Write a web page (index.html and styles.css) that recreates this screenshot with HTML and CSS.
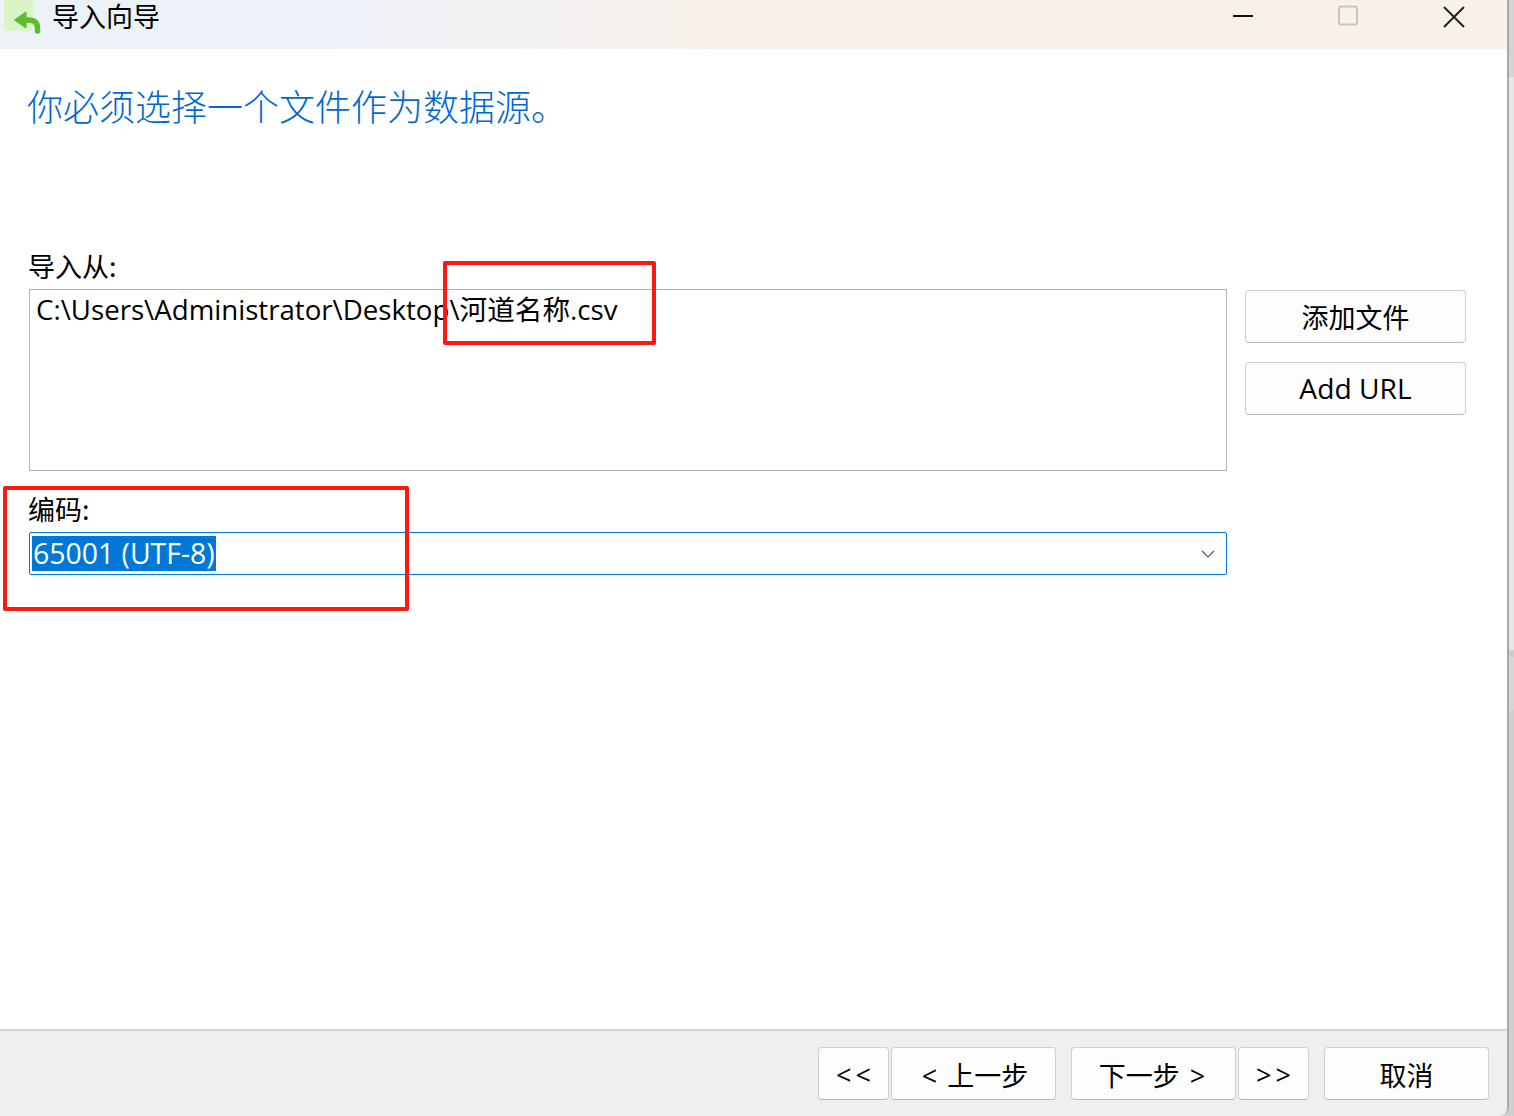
FILE: index.html
```html
<!DOCTYPE html>
<html lang="zh-CN">
<head>
    <meta charset="UTF-8">
    <title>导入向导</title>
    <link rel="stylesheet" href="styles.css">
</head>
<body>
    <div class="window">
        <div class="titlebar">
            <div class="title-left">
                <span class="app-icon">
                    <svg width="44" height="36" viewBox="0 0 44 36">
                        <rect x="4" y="-6" width="29" height="37" rx="4" fill="#d9f5c5"/>
                        <path d="M20 20 H28 Q37.5 20 37.5 28 V31" fill="none" stroke="#5dbb2e" stroke-width="5.5" stroke-linecap="round"/>
                        <path d="M14.5 20 L26 12 V28 Z" fill="#5dbb2e" stroke="#5dbb2e" stroke-width="1" stroke-linejoin="round"/>
                    </svg>
                </span>
                <span class="title-text">导入向导</span>
            </div>
            <div class="window-controls">
                <span class="win-btn"><svg width="22" height="22" viewBox="0 0 22 22"><path d="M1 11 H21" stroke="#111" stroke-width="2"/></svg></span>
                <span class="win-btn"><svg width="22" height="22" viewBox="0 0 22 22"><rect x="2" y="1.5" width="18" height="18" rx="2" fill="none" stroke="#c8c6c2" stroke-width="2"/></svg></span>
                <span class="win-btn"><svg width="24" height="24" viewBox="0 0 24 24"><path d="M2 2 L22 22 M22 2 L2 22" stroke="#222" stroke-width="2"/></svg></span>
            </div>
        </div>

        <div class="content">
            <h1 class="heading">你必须选择一个文件作为数据源。</h1>

            <label class="field-label first">导入从:</label>
            <div class="source-row">
                <div class="file-box">C:\Users\Administrator\Desktop\河道名称.csv</div>
                <div class="side-buttons">
                    <button class="btn">添加文件</button>
                    <button class="btn btn-latin">Add URL</button>
                </div>
            </div>

            <label class="field-label second">编码:</label>
            <div class="encoding-select">
                <span class="selected-text">65001 (UTF-8)</span>
                <svg class="chevron" width="14" height="8" viewBox="0 0 14 8"><path d="M1 1 L7 7 L13 1" fill="none" stroke="#555" stroke-width="1.2"/></svg>
            </div>
        </div>

        <div class="footer">
            <button class="btn btn-small">&lt;&lt;</button>
            <button class="btn btn-step nav-prev">&lt; 上一步</button>
            <button class="btn btn-step nav-next">下一步 &gt;</button>
            <button class="btn btn-small">&gt;&gt;</button>
            <button class="btn btn-step nav-cancel">取消</button>
        </div>
    </div>

    <!-- red annotation boxes drawn over the screenshot -->
    <div class="mark mark-file"></div>
    <div class="mark mark-encoding"></div>
</body>
</html>
```

FILE: styles.css
```css
html, body {
    margin: 0;
    height: 100%;
}

body {
    width: 1514px;
    height: 1116px;
    overflow: hidden;
    position: relative;
    /* the strip of desktop showing to the right of the window */
    background: linear-gradient(180deg,
        #d4d4d4 0, #d4d4d4 77px,
        #e6e6e6 77px, #e6e6e6 650px,
        #cdcdcd 650px, #cdcdcd 657px,
        #d6d6d6 657px, #d6d6d6 710px,
        #cfcfcf 710px);
    font-family: "Open Sans", "Noto Sans CJK SC", sans-serif;
    color: #000;
}

.window {
    display: flex;
    flex-direction: column;
    box-sizing: border-box;
    width: 1509px;
    height: 1116px;
    background: #fff;
    border-right: 2px solid #aaa;
    border-bottom-right-radius: 10px;
}

.titlebar {
    display: flex;
    justify-content: space-between;
    height: 49px;
    flex-shrink: 0;
    background: linear-gradient(90deg, #edf2f9 20%, #f8f0ea 48%);
}

.title-left {
    display: flex;
    align-items: flex-start;
}

.app-icon {
    display: block;
    width: 52px;
    height: 36px;
}

.title-text {
    font-family: "Noto Sans CJK SC", sans-serif;
    font-size: 27px;
    line-height: 32px;
}

.window-controls {
    display: flex;
    align-items: flex-start;
    padding-right: 43px;
    gap: 83px;
}

.win-btn {
    display: block;
    width: 22px;
    height: 22px;
    padding-top: 5px;
}

.content {
    flex: 1;
    padding: 0 0 0 29px;
}

.heading {
    margin: 32px 0 0 -2px;
    font-family: "Noto Sans CJK SC", sans-serif;
    font-size: 36px;
    font-weight: 300;
    line-height: 48px;
    color: #0068d0;
}

.field-label {
    display: block;
    margin-left: -1px;
    font-family: "Noto Sans CJK SC", sans-serif;
    font-size: 27px;
    line-height: 36px;
}

.field-label.first {
    margin-top: 119px;
    margin-bottom: 5px;
}

.field-label.second {
    margin-top: 20px;
    margin-bottom: 5px;
}

.source-row {
    display: flex;
    gap: 18px;
}

.file-box {
    box-sizing: border-box;
    width: 1198px;
    height: 182px;
    padding: 0 6px;
    border: 1px solid #b4b4b4;
    font-size: 27.65px;
    line-height: 38px;
}

.side-buttons {
    display: flex;
    flex-direction: column;
    gap: 19px;
    padding-top: 1px;
}

.btn {
    box-sizing: border-box;
    width: 221px;
    height: 53px;
    padding: 0;
    background: #fdfdfd;
    border: 1px solid #cfcfcf;
    border-bottom-color: #b8b8b8;
    border-radius: 4px;
    font-family: "Open Sans", "Noto Sans CJK SC", sans-serif;
    font-size: 27px;
    word-spacing: 3px;
    color: #000;
}

.btn-latin {
    padding-bottom: 2px;
    font-size: 28.2px;
    word-spacing: 0;
}

.encoding-select {
    display: flex;
    align-items: center;
    justify-content: space-between;
    box-sizing: border-box;
    width: 1198px;
    height: 43px;
    padding: 0 11px 0 2px;
    border: 1px solid #0078d7;
    border-radius: 2px;
}

.selected-text {
    padding: 0 1px;
    background: #0078d7;
    color: #fff;
    font-size: 28.4px;
    line-height: 35px;
}

.footer {
    display: flex;
    flex-shrink: 0;
    box-sizing: border-box;
    height: 87px;
    padding: 16px 18px 0 0;
    justify-content: flex-end;
    gap: 2px;
    background: #efefef;
    border-top: 2px solid #d4d4d4;
    border-bottom-right-radius: 8px;
}

.footer .btn {
    padding-top: 2px;
}

.btn-small {
    width: 71px;
    letter-spacing: 4px;
}

.footer .btn-small {
    padding-left: 4px;
}

.btn-step {
    width: 165px;
}

.footer .nav-prev {
    padding-left: 3px;
}

.footer .nav-next {
    margin-left: 13px;
    padding-right: 3px;
}

.nav-cancel {
    margin-left: 13px;
}

.mark {
    position: absolute;
    box-sizing: border-box;
    border: 4px solid #fb1a12;
    border-radius: 2px;
}

.mark-file {
    left: 443px;
    top: 261px;
    width: 213px;
    height: 84px;
}

.mark-encoding {
    left: 3px;
    top: 486px;
    width: 406px;
    height: 125px;
}
```
